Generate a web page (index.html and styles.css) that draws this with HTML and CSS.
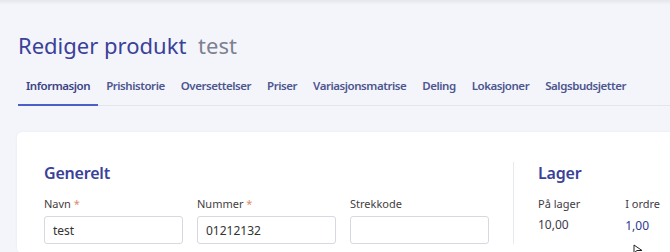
FILE: index.html
```html
<!DOCTYPE html>
<html>

<head>
  <meta charset="UTF-8">
  <meta name="viewport" content="width=device-width, initial-scale=1.0">
  <link rel="stylesheet" href="styles.css">
</head>

<body>
  <div class="topbar"></div>
  <div class="page">
    <h1 class="title">Rediger produkt <span class="title-sub">test</span></h1>

    <nav class="tabs">
      <a class="tab active">Informasjon</a>
      <a class="tab">Prishistorie</a>
      <a class="tab">Oversettelser</a>
      <a class="tab">Priser</a>
      <a class="tab">Variasjonsmatrise</a>
      <a class="tab">Deling</a>
      <a class="tab">Lokasjoner</a>
      <a class="tab">Salgsbudsjetter</a>
    </nav>

    <div class="card">
      <section class="general">
        <h2 class="section-title">Generelt</h2>
        <div class="fields">
          <div class="field">
            <label for="navn">Navn <span class="req">*</span></label>
            <input type="text" id="navn" value="test">
          </div>
          <div class="field">
            <label for="nummer">Nummer <span class="req">*</span></label>
            <input type="text" id="nummer" value="01212132">
          </div>
          <div class="field">
            <label for="strekkode">Strekkode</label>
            <input type="text" id="strekkode" value="">
          </div>
        </div>
      </section>

      <section class="stock">
        <h2 class="section-title">Lager</h2>
        <div class="stock-grid">
          <div class="stock-item">
            <div class="stock-label">På lager</div>
            <div class="stock-value">10,00</div>
          </div>
          <div class="stock-item">
            <div class="stock-label">I ordre</div>
            <div class="stock-value link">1,00</div>
          </div>
        </div>
      </section>
    </div>
  </div>

  <!-- musepeker -->
  <svg class="cursor" width="10" height="8" viewBox="0 0 10 8">
    <path d="M1 1 L1 9 L4 6.5 L9 6.5 Z" fill="#fff" stroke="#222" stroke-width="1"/>
  </svg>
</body>

</html>
```

FILE: styles.css
```css
/* Grunnoppsett */
html,
body {
  margin: 0;
  height: 100%;
  overflow: hidden;
}

body {
  background-color: #f4f5fa;
  font-family: "Noto Sans", "Open Sans", sans-serif;
  color: #333;
  position: relative;
}

.topbar {
  height: 5px;
  background: linear-gradient(#e6e7ec, #f4f5fa);
}

.page {
  padding-left: 18px;
}

/* Tittel */
.title {
  margin: 25px 0 0;
  font-size: 22px;
  font-weight: 400;
  line-height: 30px;
  color: #3a4199;
}

.title-sub {
  color: #7c8090;
  margin-left: 6px;
}

/* Faner */
.tabs {
  display: flex;
  margin-top: 13px;
  border-bottom: 1px solid #e3e5ec;
}

.tab {
  padding: 5px 8px 11px;
  font-size: 11.5px;
  letter-spacing: -0.45px;
  font-weight: 600;
  color: #4d568f;
  margin-bottom: -1px;
  border-bottom: 2px solid transparent;
}

.tab.active {
  color: #3b4385;
  border-bottom-color: #4b5fc6;
}

/* Kort */
.card {
  margin-top: 26px;
  margin-left: -1px;
  background-color: #fff;
  border-radius: 5px 0 0 5px;
  box-shadow: 0 0 3px rgba(40, 50, 90, 0.06);
  display: flex;
  padding: 30px 0 9px 27px;
}

.section-title {
  margin: 0;
  font-size: 16px;
  letter-spacing: -0.2px;
  font-weight: 600;
  line-height: 22px;
  color: #3a4199;
}

.general {
  width: 445px;
  padding-right: 24px;
  border-right: 1px solid #e8e9ef;
}

.fields {
  display: flex;
  gap: 14px;
  margin-top: 13px;
}

.field {
  display: flex;
  flex-direction: column;
}

.field label {
  font-size: 11px;
  line-height: 14px;
  color: #454040;
  margin-bottom: 5px;
}

.req {
  color: #e08a6a;
}

.field input {
  width: 139px;
  height: 28px;
  box-sizing: border-box;
  border: 1px solid #d6d9e2;
  border-radius: 3px;
  padding: 0 8px;
  font-family: inherit;
  font-size: 12px;
  color: #333;
}

/* Lager */
.stock {
  padding-left: 24px;
  min-width: 0;
}

.stock-grid {
  display: flex;
  gap: 45px;
  margin-top: 13px;
}

.stock-label {
  font-size: 11px;
  line-height: 14px;
  color: #3f3a45;
  white-space: nowrap;
}

.stock-value {
  font-size: 12px;
  line-height: 16px;
  margin-top: 6px;
  color: #3d3b4a;
}

.stock-value.link {
  color: #2c3a8e;
  margin-top: 7px;
}

.cursor {
  position: absolute;
  left: 633px;
  top: 244px;
}
```
